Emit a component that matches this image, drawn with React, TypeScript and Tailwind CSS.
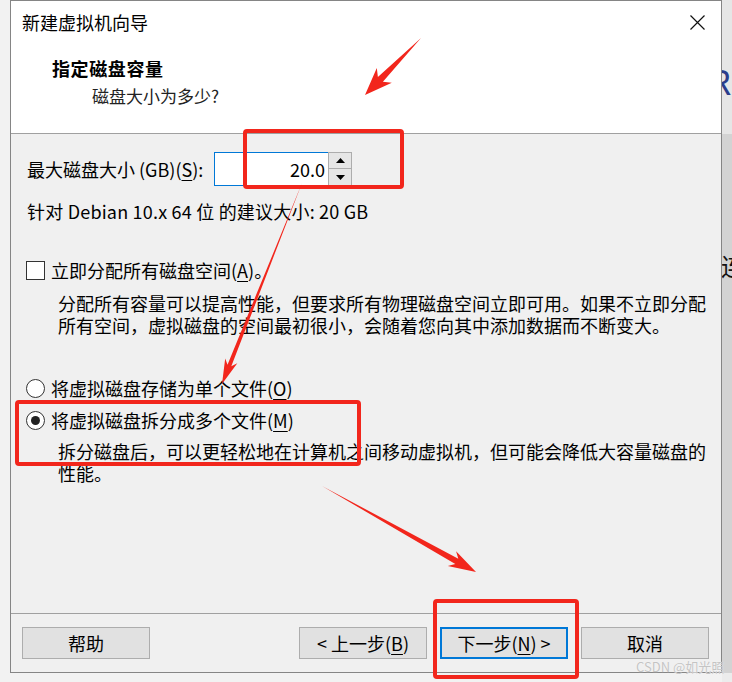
import React from "react";

// Red annotation arrows: tapered shaft + swept-back head
type Pt = [number, number];

function arrowPoints(tail: Pt, tip: Pt, headLen: number, headW: number, shaftW: number) {
    const dx = tip[0] - tail[0];
    const dy = tip[1] - tail[1];
    const len = Math.hypot(dx, dy);
    const ux = dx / len;
    const uy = dy / len;
    const nx = -uy;
    const ny = ux;
    const base: Pt = [tip[0] - ux * headLen, tip[1] - uy * headLen];
    const barb: Pt = [tip[0] - ux * headLen * 1.25, tip[1] - uy * headLen * 1.25];
    const pts: Pt[] = [
        tail,
        [base[0] + nx * shaftW / 2, base[1] + ny * shaftW / 2],
        [barb[0] + nx * headW / 2, barb[1] + ny * headW / 2],
        tip,
        [barb[0] - nx * headW / 2, barb[1] - ny * headW / 2],
        [base[0] - nx * shaftW / 2, base[1] - ny * shaftW / 2],
    ];
    return pts.map((p) => `${p[0].toFixed(1)},${p[1].toFixed(1)}`).join(" ");
}

const RED = "#f2261c";

function Accel({ children }: { children: React.ReactNode }) {
    return <span className="underline underline-offset-[3px] decoration-1">{children}</span>;
}

function Button({ children, primary }: { children: React.ReactNode; primary?: boolean }) {
    return (
        <div
            className={
                "w-[128px] h-[32px] flex items-center justify-center text-[18px] bg-[#e1e1e1] " +
                (primary ? "border-2 border-[#0078d7]" : "border border-[#adadad]")
            }
        >
            {children}
        </div>
    );
}

export default function App() {
    return (
        <div className="w-[732px] h-[682px] relative overflow-hidden bg-[#f2f2f2] flex font-['Noto_Sans_CJK_SC','Noto_Sans',sans-serif] text-black">
            <div className="w-[10px] shrink-0" />

            {/* Wizard window */}
            <div className="w-[712px] h-[673px] shrink-0 border border-[#858585] bg-[#f0f0f0] flex flex-col">
                {/* Header */}
                <div className="h-[133px] shrink-0 bg-white border-b border-[#a0a0a0] flex flex-col pl-[11px]">
                    <div className="mt-[10px] h-[22px] flex items-center justify-between pr-[16px]">
                        <span className="text-[18px] leading-[22px]">新建虚拟机向导</span>
                        <svg width="15" height="15" viewBox="0 0 15 15" className="mt-[1px]">
                            <path d="M0.5 0.5 L14.5 14.5 M14.5 0.5 L0.5 14.5" stroke="#111" strokeWidth="1.2" />
                        </svg>
                    </div>
                    <div className="mt-[24px] h-[22px] leading-[22px] pl-[30px] text-[18px] font-bold tracking-[0.6px]">
                        指定磁盘容量
                    </div>
                    <div className="mt-[6px] h-[22px] leading-[22px] pl-[70px] text-[17px] text-[#222]">
                        磁盘大小为多少?
                    </div>
                </div>

                {/* Body */}
                <div className="flex-1 flex flex-col pl-[16px] text-[18px]">
                    <div className="mt-[18px] h-[34px] flex items-center">
                        <span className="w-[187px] shrink-0 leading-[22px]">
                            最大磁盘大小 (GB)(<Accel>S</Accel>):
                        </span>
                        <div className="flex h-[34px]">
                            <div className="w-[114px] h-[34px] bg-white border border-[#0078d7] border-r-0 flex items-center justify-end pr-[3px] text-[18px]">
                                20.0
                            </div>
                            <div className="w-[24px] h-[34px] flex flex-col bg-white">
                                <div className="h-[17px] bg-[#e6e6e6] border border-[#adadad] flex items-center justify-center">
                                    <svg width="9" height="5" viewBox="0 0 9 5"><path d="M0 5 L4.5 0 L9 5 Z" fill="#000" /></svg>
                                </div>
                                <div className="h-[17px] bg-[#e6e6e6] border border-t-0 border-[#adadad] flex items-center justify-center">
                                    <svg width="9" height="5" viewBox="0 0 9 5"><path d="M0 0 L9 0 L4.5 5 Z" fill="#000" /></svg>
                                </div>
                            </div>
                        </div>
                    </div>

                    <div className="mt-[13px] h-[24px] leading-[24px] tracking-[0.2px]">
                        针对 Debian 10.x 64 位 的建议大小: 20 GB
                    </div>

                    <div className="mt-[35px] h-[24px] flex items-center -ml-[1px]">
                        <div className="w-[19px] h-[19px] bg-white border border-[#333]" />
                        <span className="ml-[6px] leading-[24px]">
                            立即分配所有磁盘空间(<Accel>A</Accel>)。
                        </span>
                    </div>
                    <div className="mt-[10px] ml-[31px] leading-[22px]">
                        <div>分配所有容量可以提高性能，但要求所有物理磁盘空间立即可用。如果不立即分配</div>
                        <div>所有空间，虚拟磁盘的空间最初很小，会随着您向其中添加数据而不断变大。</div>
                    </div>

                    <div className="mt-[40px] h-[24px] flex items-center -ml-[1px]">
                        <div className="w-[19px] h-[19px] rounded-full bg-white border border-[#333]" />
                        <span className="ml-[6px] leading-[24px]">
                            将虚拟磁盘存储为单个文件(<Accel>O</Accel>)
                        </span>
                    </div>
                    <div className="mt-[8px] h-[24px] flex items-center -ml-[1px]">
                        <div className="w-[19px] h-[19px] rounded-full bg-white border border-[#333] flex items-center justify-center">
                            <div className="w-[9px] h-[9px] rounded-full bg-[#222]" />
                        </div>
                        <span className="ml-[6px] leading-[24px]">
                            将虚拟磁盘拆分成多个文件(<Accel>M</Accel>)
                        </span>
                    </div>
                    <div className="mt-[8px] ml-[31px] leading-[22px]">
                        <div>拆分磁盘后，可以更轻松地在计算机之间移动虚拟机，但可能会降低大容量磁盘的</div>
                        <div>性能。</div>
                    </div>
                </div>

                {/* Footer */}
                <div className="h-[59px] shrink-0 border-t border-[#a0a0a0] flex items-start pt-[13px] pl-[11px] pr-[12px]">
                    <Button>帮助</Button>
                    <div className="flex-1" />
                    <div className="flex gap-[13px]">
                        <Button>&lt; 上一步(<Accel>B</Accel>)</Button>
                        <Button primary>下一步(<Accel>N</Accel>) &gt;</Button>
                        <Button>取消</Button>
                    </div>
                </div>
            </div>

            {/* Desktop behind, right edge */}
            <div className="flex-1 flex flex-col overflow-hidden">
                <div className="h-[134px] bg-[#e6e6e6] relative overflow-hidden">
                    <span className="absolute left-[-12px] top-[62px] text-[34px] leading-[40px] text-[#2a3d8c] font-['Noto_Sans',sans-serif]">R</span>
                </div>
                <div className="flex-1 bg-[#d3d3d3] relative overflow-hidden">
                    <span className="absolute left-[-1px] top-[118px] text-[24px] leading-[28px] text-[#111]">连</span>
                </div>
                <div className="h-[9px] bg-[#ececec]" />
            </div>

            {/* Annotation overlays */}
            <div className="absolute left-[243px] top-[129px] w-[161px] h-[60px] border-[4px] border-[#f2261c] rounded-[4px] pointer-events-none" />
            <div className="absolute left-[15px] top-[400px] w-[346px] h-[66px] border-[4px] border-[#f2261c] rounded-[4px] pointer-events-none" />
            <div className="absolute left-[433px] top-[599px] w-[146px] h-[80px] border-[4px] border-[#f2261c] rounded-[4px] pointer-events-none" />

            <svg className="absolute left-0 top-0 pointer-events-none" width="732" height="682" viewBox="0 0 732 682">
                <polygon points={arrowPoints([421, 38], [365, 95], 22, 21, 7)} fill={RED} />
                <polygon points={arrowPoints([302, 183], [222, 384], 20, 13, 4)} fill={RED} />
                <polygon points={arrowPoints([322, 486], [476, 572], 22, 17, 6)} fill={RED} />
            </svg>

            <span className="absolute left-[636px] top-[659px] text-[13px] leading-[16px] text-[#c4c4c4] [text-shadow:0_0_1px_#fff]">
                CSDN @如光照
            </span>
        </div>
    );
}
